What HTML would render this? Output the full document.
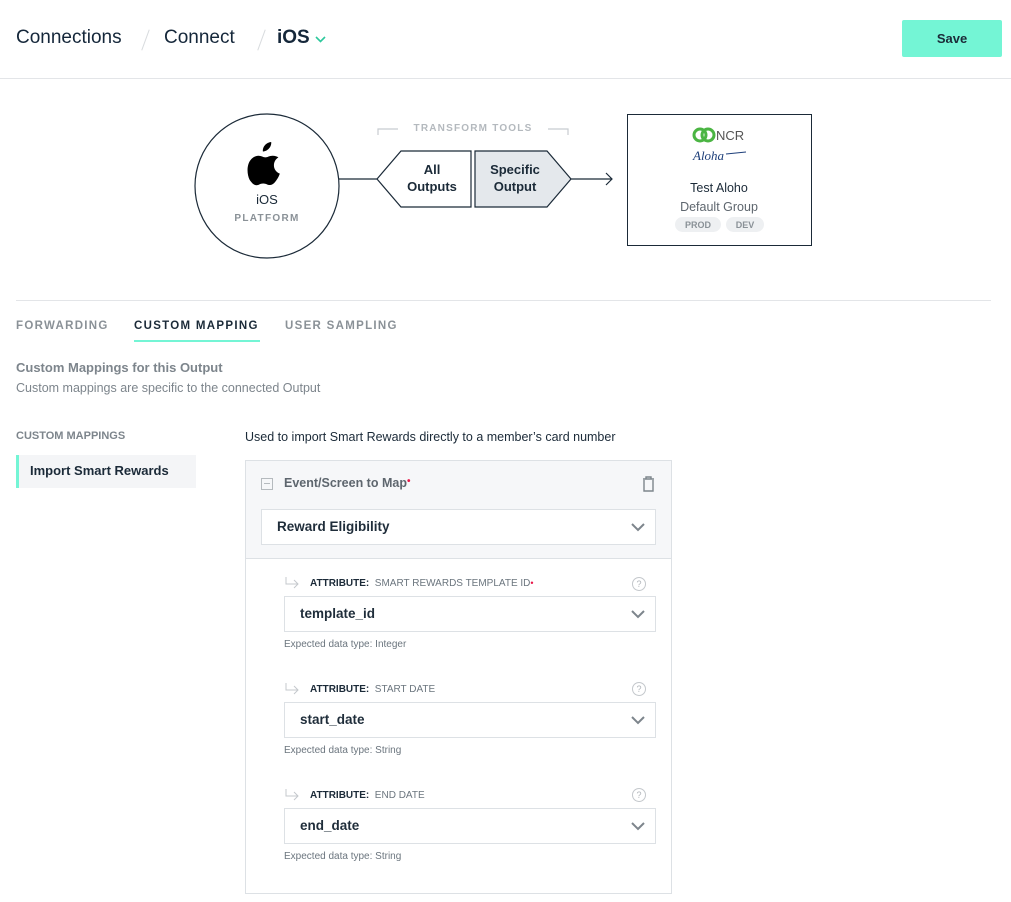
<!DOCTYPE html>
<html><head><meta charset="utf-8"><style>
*{box-sizing:border-box;margin:0;padding:0}
body{width:1011px;height:902px;background:#fff;font-family:"Liberation Sans",sans-serif;color:#1b2a38;position:relative;overflow:hidden}
.a{position:absolute;white-space:nowrap}
.crumb{font-size:19px;top:27px;color:#15273a}
.sel{position:absolute;border:1px solid #dde1e5;background:#fff;height:36px;font-size:13.5px;font-weight:bold;color:#1f2d3a;padding:9px 15px}
.sel svg{position:absolute;right:10px;top:13px}
.attr{font-size:10px;color:#6b757e}
.attr b{color:#1b2a38;font-size:10px}
.exp{font-size:10px;color:#6b757e}
.q{position:absolute;width:14px;height:14px;border:1px solid #c4c8cc;border-radius:50%;font-size:9px;color:#b0b5ba;text-align:center;line-height:12px}
</style></head><body>
<div class="a crumb" style="left:16px">Connections</div>
<div class="a" style="left:145px;top:29px;width:1px;height:22px;background:#d8dbde;transform:rotate(20deg)"></div>
<div class="a crumb" style="left:164px">Connect</div>
<div class="a" style="left:261px;top:29px;width:1px;height:22px;background:#d8dbde;transform:rotate(20deg)"></div>
<div class="a crumb" style="left:277px;font-weight:bold">iOS</div>
<svg class="a" style="left:315px;top:36px" width="11" height="7"><path d="M1 1l4.5 4.5L10 1" stroke="#2dc89c" stroke-width="1.6" fill="none"/></svg>
<div class="a" style="left:902px;top:20px;width:100px;height:37px;background:#74f5d5;border-radius:2px;font-size:13px;font-weight:bold;text-align:center;line-height:37px;color:#1b2a38">Save</div>
<div class="a" style="left:0;top:78px;width:1011px;height:1px;background:#e3e5e8"></div>

<svg class="a" style="left:0;top:100px" width="1011" height="170">
<circle cx="267" cy="86" r="72" fill="#fff" stroke="#1b2a38" stroke-width="1.2"/>
<g transform="translate(248,42) scale(1.6)">
<path d="M14.5 0c.2 1.6-.5 3.1-1.4 4.1-1 1.1-2.4 1.9-3.8 1.8-.2-1.5.5-3.1 1.4-4C11.6.8 13.2.1 14.5 0z"/>
<path d="M19 9.6c-1.9 1.2-2.8 3-2.8 5 0 2.5 1.6 4.4 3.7 5.2-.5 1.4-1.1 2.7-2 3.9-1.1 1.6-2.3 3.2-4.1 3.2-1.8 0-2.3-1-4.3-1-2.1 0-2.6 1.1-4.3 1.1-1.8 0-3.1-1.8-4.200-3.400C-.6 20.500-1 14.7 1.500 11.4 2.800 9.700 4.600 8.600 6.500 8.600c1.900 0 3 1 4.400 1 1.400 0 2.400-1 4.500-1 1.500 0 2.800.5 3.600 1z"/>
</g>
<line x1="339" y1="79" x2="377" y2="79" stroke="#1b2a38" stroke-width="1.2"/>
<path d="M377 79L401 51H471V107H401Z" fill="#fff" stroke="#1b2a38" stroke-width="1.2"/>
<path d="M475 51H547L571 79L547 107H475Z" fill="#e4e8ec" stroke="#1b2a38" stroke-width="1.2"/>
<line x1="571" y1="79" x2="612" y2="79" stroke="#1b2a38" stroke-width="1.2"/>
<path d="M606 73l6 6-6 6" stroke="#1b2a38" stroke-width="1.2" fill="none"/>
<path d="M378 35v-6h20M548 29h20v6" stroke="#c8ccd0" stroke-width="1.2" fill="none"/>
<text x="473" y="31" font-size="10" font-weight="bold" fill="#b4b9be" text-anchor="middle" letter-spacing="1.2" font-family="Liberation Sans">TRANSFORM TOOLS</text>
<text x="267" y="104" font-size="13" text-anchor="middle" fill="#1b2a38" font-family="Liberation Sans">iOS</text>
<text x="267" y="121" font-size="10" font-weight="bold" text-anchor="middle" fill="#8a9197" letter-spacing="1.3" font-family="Liberation Sans">PLATFORM</text>
<text x="432" y="74" font-size="13" font-weight="bold" text-anchor="middle" fill="#1b2a38" font-family="Liberation Sans">All</text>
<text x="432" y="91" font-size="13" font-weight="bold" text-anchor="middle" fill="#1b2a38" font-family="Liberation Sans">Outputs</text>
<text x="515" y="74" font-size="13" font-weight="bold" text-anchor="middle" fill="#1b2a38" font-family="Liberation Sans">Specific</text>
<text x="515" y="91" font-size="13" font-weight="bold" text-anchor="middle" fill="#1b2a38" font-family="Liberation Sans">Output</text>
<rect x="627.5" y="14.5" width="184" height="131" fill="#fff" stroke="#1b2a38"/>
<circle cx="700" cy="35" r="6" fill="none" stroke="#4bb543" stroke-width="3"/>
<circle cx="708" cy="35" r="6" fill="none" stroke="#4bb543" stroke-width="3"/>
<text x="716" y="40" font-size="13" fill="#555" font-family="Liberation Sans">NCR</text>
<text x="693" y="60" font-size="13" font-style="italic" fill="#1e3f7a" font-family="Liberation Serif">Aloha</text>
<line x1="726" y1="54" x2="746" y2="52" stroke="#1e3f7a" stroke-width="1"/>
<text x="719" y="92" font-size="12.5" text-anchor="middle" fill="#1b2a38" font-family="Liberation Sans">Test Aloho</text>
<text x="719" y="111" font-size="12.5" text-anchor="middle" fill="#5e666e" font-family="Liberation Sans">Default Group</text>
<rect x="675" y="117" width="46" height="15" rx="7.5" fill="#eef0f2"/>
<rect x="726" y="117" width="38" height="15" rx="7.5" fill="#eef0f2"/>
<text x="698" y="128" font-size="9" font-weight="bold" text-anchor="middle" fill="#8a9197" font-family="Liberation Sans">PROD</text>
<text x="745" y="128" font-size="9" font-weight="bold" text-anchor="middle" fill="#8a9197" font-family="Liberation Sans">DEV</text>
</svg>

<div class="a" style="left:16px;top:300px;width:975px;height:1px;background:#e3e5e8"></div>
<div class="a" style="left:16px;top:320px;font-size:11.5px;font-weight:bold;letter-spacing:1.3px;color:#8a9197">FORWARDING</div>
<div class="a" style="left:134px;top:320px;font-size:11.5px;font-weight:bold;letter-spacing:1.3px;color:#1b2a38">CUSTOM MAPPING</div>
<div class="a" style="left:134px;top:340px;width:126px;height:2px;background:#74f5d5"></div>
<div class="a" style="left:285px;top:320px;font-size:11.5px;font-weight:bold;letter-spacing:1.3px;color:#8a9197">USER SAMPLING</div>
<div class="a" style="left:16px;top:360px;font-size:13px;font-weight:bold;color:#7d858c">Custom Mappings for this Output</div>
<div class="a" style="left:16px;top:381px;font-size:12.5px;color:#7d858c">Custom mappings are specific to the connected Output</div>
<div class="a" style="left:16px;top:430px;font-size:11px;font-weight:bold;color:#7d858c">CUSTOM MAPPINGS</div>
<div class="a" style="left:16px;top:455px;width:180px;height:33px;background:#f4f5f7;border-left:3px solid #74f5d5;font-size:13px;font-weight:bold;padding:8px 0 0 11px">Import Smart Rewards</div>
<div class="a" style="left:245px;top:430px;font-size:12.5px;color:#1b2a38">Used to import Smart Rewards directly to a member’s card number</div>

<div class="a" style="left:245px;top:460px;width:427px;height:434px;border:1px solid #dde1e5;background:#fff"></div>
<div class="a" style="left:246px;top:461px;width:425px;height:98px;background:#f6f7f9;border-bottom:1px solid #dde1e5"></div>
<div class="a" style="left:261px;top:478px;width:12px;height:12px;border:1px solid #b5babe"></div>
<div class="a" style="left:264px;top:483px;width:6px;height:1px;background:#b5babe"></div>
<div class="a" style="left:284px;top:476px;font-size:12.5px;font-weight:bold;color:#5e666e">Event/Screen to Map<span style="color:#e8194a;font-size:10px;vertical-align:top">•</span></div>
<svg class="a" style="left:641px;top:476px" width="15" height="16"><path d="M2 3h11M5 3V1h5v2M3 4v11h9V4" stroke="#7d858c" stroke-width="1.4" fill="none"/></svg>
<div class="sel" style="left:261px;top:509px;width:395px">Reward Eligibility<svg width="14" height="9"><path d="M1 1l6 6 6-6" stroke="#7d858c" stroke-width="2" fill="none"/></svg></div>

<svg class="a" style="left:284px;top:577px" width="16" height="12"><path d="M2 0v7h12M10 3l4 4-4 4" stroke="#c4c8cc" fill="none"/></svg>
<div class="a attr" style="left:310px;top:578px"><b>ATTRIBUTE:</b>&nbsp; SMART REWARDS TEMPLATE ID<span style="color:#e8194a;vertical-align:top;font-size:9px">•</span></div>
<div class="q" style="left:632px;top:577px">?</div>
<div class="sel" style="left:284px;top:596px;width:372px">template_id<svg width="14" height="9"><path d="M1 1l6 6 6-6" stroke="#7d858c" stroke-width="2" fill="none"/></svg></div>
<div class="a exp" style="left:284px;top:639px">Expected data type: Integer</div>

<svg class="a" style="left:284px;top:683px" width="16" height="12"><path d="M2 0v7h12M10 3l4 4-4 4" stroke="#c4c8cc" fill="none"/></svg>
<div class="a attr" style="left:310px;top:684px"><b>ATTRIBUTE:</b>&nbsp; START DATE</div>
<div class="q" style="left:632px;top:682px">?</div>
<div class="sel" style="left:284px;top:702px;width:372px">start_date<svg width="14" height="9"><path d="M1 1l6 6 6-6" stroke="#7d858c" stroke-width="2" fill="none"/></svg></div>
<div class="a exp" style="left:284px;top:745px">Expected data type: String</div>

<svg class="a" style="left:284px;top:789px" width="16" height="12"><path d="M2 0v7h12M10 3l4 4-4 4" stroke="#c4c8cc" fill="none"/></svg>
<div class="a attr" style="left:310px;top:790px"><b>ATTRIBUTE:</b>&nbsp; END DATE</div>
<div class="q" style="left:632px;top:788px">?</div>
<div class="sel" style="left:284px;top:808px;width:372px">end_date<svg width="14" height="9"><path d="M1 1l6 6 6-6" stroke="#7d858c" stroke-width="2" fill="none"/></svg></div>
<div class="a exp" style="left:284px;top:851px">Expected data type: String</div>
</body></html>
